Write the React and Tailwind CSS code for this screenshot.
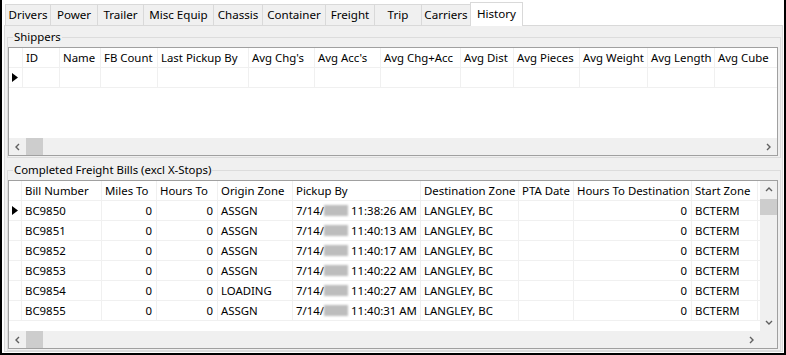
import React from "react";

const tabs = ["Drivers", "Power", "Trailer", "Misc Equip", "Chassis", "Container", "Freight", "Trip", "Carriers", "History"];
const tabWidths = [46, 48, 47, 71, 50, 64, 50, 48, 50, 53];

const shipperCols = [
  { label: "ID", w: 37 },
  { label: "Name", w: 41 },
  { label: "FB Count", w: 57 },
  { label: "Last Pickup By", w: 91 },
  { label: "Avg Chg's", w: 66 },
  { label: "Avg Acc's", w: 66 },
  { label: "Avg Chg+Acc", w: 80 },
  { label: "Avg Dist", w: 53 },
  { label: "Avg Pieces", w: 66 },
  { label: "Avg Weight", w: 68 },
  { label: "Avg Length", w: 67 },
  { label: "Avg Cube", w: 70 },
];

const billCols = [
  { label: "Bill Number", w: 80 },
  { label: "Miles To", w: 55 },
  { label: "Hours To", w: 61 },
  { label: "Origin Zone", w: 75 },
  { label: "Pickup By", w: 128 },
  { label: "Destination Zone", w: 98 },
  { label: "PTA Date", w: 55 },
  { label: "Hours To Destination", w: 118 },
  { label: "Start Zone", w: 66 },
];

const bills = [
  { bill: "BC9850", zone: "ASSGN", time: "11:38:26 AM" },
  { bill: "BC9851", zone: "ASSGN", time: "11:40:13 AM" },
  { bill: "BC9852", zone: "ASSGN", time: "11:40:17 AM" },
  { bill: "BC9853", zone: "ASSGN", time: "11:40:22 AM" },
  { bill: "BC9854", zone: "LOADING", time: "11:40:27 AM" },
  { bill: "BC9855", zone: "ASSGN", time: "11:40:31 AM" },
];

function Chevron({ dir }) {
  const paths = {
    left: "M5 1 L2 4 L5 7",
    right: "M2 1 L5 4 L2 7",
    up: "M1 5 L4 2 L7 5",
    down: "M1 2 L4 5 L7 2",
  };
  return (
    <svg width="8" height="8" viewBox="0 0 8 8" className="shrink-0">
      <path d={paths[dir]} fill="none" stroke="#606060" strokeWidth="1.4" />
    </svg>
  );
}

function RowArrow() {
  return (
    <svg width="6" height="9" viewBox="0 0 6 9">
      <path d="M0 0 L6 4.5 L0 9 Z" fill="#000" />
    </svg>
  );
}

function HScroll() {
  return (
    <div className="h-[17px] flex items-center bg-[#f0f0f0]">
      <div className="w-[17px] flex justify-center"><Chevron dir="left" /></div>
      <div className="w-[17px] h-[17px] bg-[#cdcdcd]" />
      <div className="flex-1" />
      <div className="w-[17px] flex justify-center"><Chevron dir="right" /></div>
    </div>
  );
}

function Cell({ w, children, right }) {
  return (
    <div
      style={{ width: w }}
      className={`shrink-0 h-full flex items-center border-r border-[#f0f0f0] whitespace-nowrap overflow-hidden ${right ? "justify-end pr-[4px]" : "pl-[3px]"}`}
    >
      {children}
    </div>
  );
}

export default function App() {
  return (
    <div className="w-[786px] h-[355px] bg-white border-x-2 border-b-2 border-black flex flex-col overflow-hidden font-['Noto_Sans',sans-serif] text-[11.4px] leading-[16px] text-black">
      {/* Tabs */}
      <div className="flex items-end h-[25px] pl-[4px] shrink-0 text-[11.6px]">
        {tabs.map((t, i) => (
          <div
            key={t}
            style={{ width: tabWidths[i] }}
            className={
              t === "History"
                ? "h-[24px] -mb-px bg-white border border-b-0 border-[#d9d9d9] -ml-px relative z-10 flex items-center justify-center pb-[2px]"
                : "h-[21px] bg-[#f0f0f0] border border-b-0 border-[#d9d9d9] -ml-px flex items-center justify-center"
            }
          >
            {t}
          </div>
        ))}
      </div>

      {/* Page */}
      <div className="flex-1 min-w-0 ml-[2px] mr-[1px] mb-[1px] border border-[#d9d9d9] bg-[#f0f0f0] pl-[2px] pr-[1px] pt-[3px] flex flex-col">
        {/* Shippers */}
        <fieldset className="min-w-0 border border-[#dcdcdc] pl-0 pr-[2px] pb-[1px]">
          <legend className="ml-[5px] px-[1px]">Shippers</legend>
          <div className="mt-[2px] h-[109px] border border-[#a0a0a0] bg-white flex flex-col overflow-hidden">
            <div className="h-[20px] flex border-b border-[#f0f0f0] overflow-hidden">
              <Cell w={14} />
              {shipperCols.map((c) => (
                <Cell key={c.label} w={c.w}>{c.label}</Cell>
              ))}
            </div>
            <div className="h-[20px] flex border-b border-[#f0f0f0] overflow-hidden">
              <div className="w-[14px] shrink-0 h-full flex items-center pl-[3px] border-r border-[#f0f0f0]"><RowArrow /></div>
              {shipperCols.map((c) => (
                <Cell key={c.label} w={c.w} />
              ))}
            </div>
            <div className="flex-1" />
            <HScroll />
          </div>
        </fieldset>

        {/* Completed Freight Bills */}
        <fieldset className="min-w-0 mt-[4px] border border-[#dcdcdc] pl-0 pr-[2px] pb-[1px]">
          <legend className="ml-[5px] px-[1px]">Completed Freight Bills (excl X-Stops)</legend>
          <div className="mt-[2px] h-[169px] border border-[#a0a0a0] bg-white flex flex-col overflow-hidden">
            <div className="flex-1 flex min-h-0">
              <div className="flex-1 min-w-0 overflow-hidden">
                <div className="h-[20px] flex border-b border-[#f0f0f0]">
                  <Cell w={13} />
                  {billCols.map((c) => (
                    <Cell key={c.label} w={c.w}>{c.label}</Cell>
                  ))}
                </div>
                {bills.map((b, i) => (
                  <div key={b.bill} className="h-[20px] flex border-b border-[#f0f0f0]">
                    <div className="w-[13px] shrink-0 h-full flex items-center pl-[3px] border-r border-[#f0f0f0]">
                      {i === 0 && <RowArrow />}
                    </div>
                    <Cell w={80}>{b.bill}</Cell>
                    <Cell w={55} right>0</Cell>
                    <Cell w={61} right>0</Cell>
                    <Cell w={75}>{b.zone}</Cell>
                    <Cell w={128}>
                      7/14/
                      <span className="inline-block w-[24px] h-[11px] bg-[#bdbdbd] blur-[1px] mr-[3px]" />
                      {b.time}
                    </Cell>
                    <Cell w={98}>LANGLEY, BC</Cell>
                    <Cell w={55} />
                    <Cell w={118} right>0</Cell>
                    <Cell w={66}>BCTERM</Cell>
                  </div>
                ))}
              </div>
              <div className="w-[17px] shrink-0 bg-[#f0f0f0] flex flex-col items-center">
                <div className="h-[18px] flex items-center"><Chevron dir="up" /></div>
                <div className="w-[17px] h-[16px] bg-[#cdcdcd]" />
                <div className="flex-1" />
                <div className="h-[17px] flex items-center"><Chevron dir="down" /></div>
              </div>
            </div>
            <div className="flex">
              <div className="flex-1"><HScroll /></div>
              <div className="w-[17px] h-[17px] bg-[#f0f0f0]" />
            </div>
          </div>
        </fieldset>
      </div>
    </div>
  );
}
